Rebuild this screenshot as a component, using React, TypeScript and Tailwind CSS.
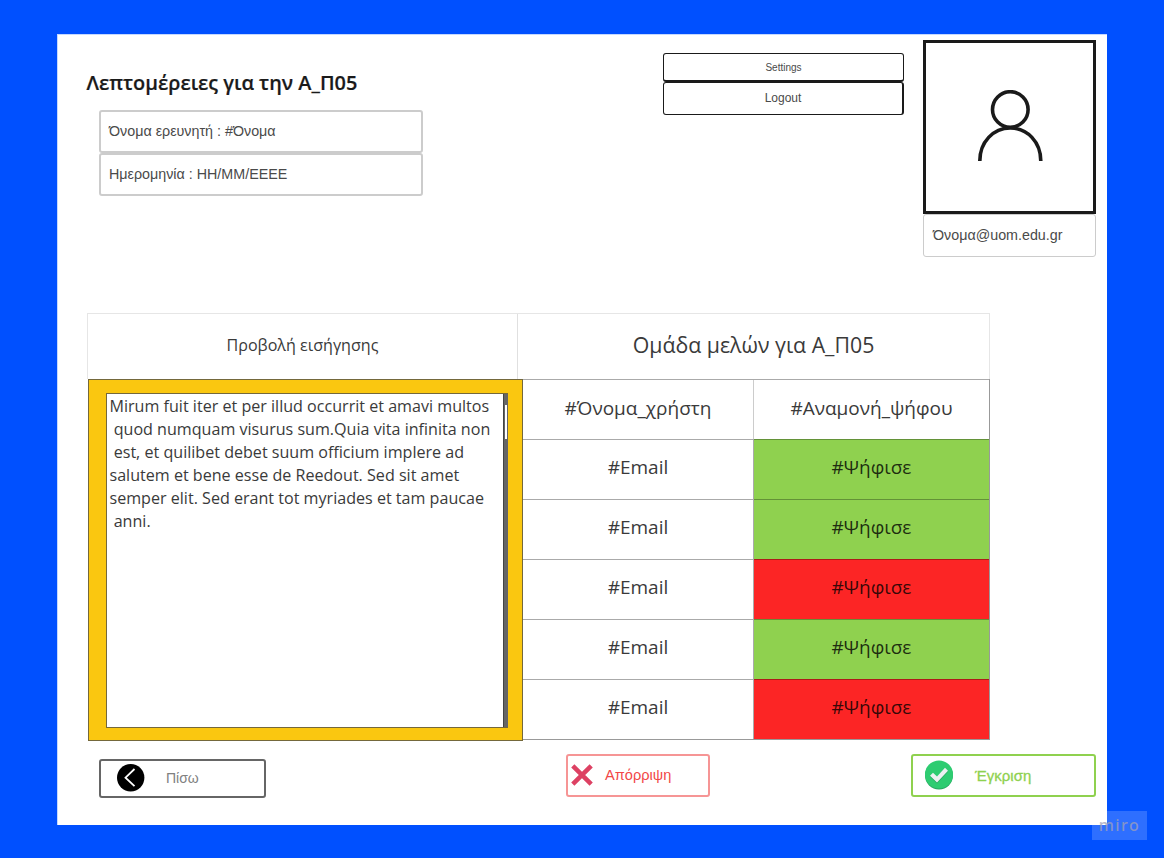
const members = [
  { name: "#Email", vote: "#Ψήφισε", color: "bg-[#8fd14f]" },
  { name: "#Email", vote: "#Ψήφισε", color: "bg-[#8fd14f]" },
  { name: "#Email", vote: "#Ψήφισε", color: "bg-[#fc2525]" },
  { name: "#Email", vote: "#Ψήφισε", color: "bg-[#8fd14f]" },
  { name: "#Email", vote: "#Ψήφισε", color: "bg-[#fc2525]" },
];

const reportLines = [
  "Mirum fuit iter et per illud occurrit et amavi multos",
  " quod numquam visurus sum.Quia vita infinita non",
  " est, et quilibet debet suum officium implere ad",
  "salutem et bene esse de Reedout. Sed sit amet",
  "semper elit. Sed erant tot myriades et tam paucae",
  " anni.",
];

function Header() {
  return (
    <header className="flex h-[279px] shrink-0 items-start font-['Liberation_Sans',sans-serif] text-[#4a4a4a]">
      <div className="ml-[29px] w-[577px] pt-[34px]">
        <h1 className="h-[42px] pl-[0.5px] whitespace-nowrap font-['Open_Sans',sans-serif] text-[19.9px] leading-[30px] font-semibold text-[#1a1a1a] [-webkit-text-stroke:0.2px]">
          Λεπτομέρειες για την Α_Π05
        </h1>
        <div className="ml-[13px] w-[324px] text-[14.3px]">
          <div className="flex h-[43px] items-center rounded-[3px] border-2 border-[#ccc] pt-px pl-2">
            Όνομα ερευνητή : #Όνομα
          </div>
          <div className="flex h-[43px] items-center rounded-[3px] border-2 border-[#ccc] pt-px pl-2">
            Ημερομηνία : HH/MM/ΕΕΕΕ
          </div>
        </div>
      </div>
      <div className="mt-[19px] flex w-[241px] flex-col">
        <button className="h-[29px] rounded-[3px] border-[1.5px] border-b-2 border-[#1a1a1a] text-[10px]">
          Settings
        </button>
        <button className="h-[33px] rounded-[3px] border-[1.5px] border-r-2 border-[#1a1a1a] pb-px text-xs">
          Logout
        </button>
      </div>
      <div className="mt-[6px] ml-[19px] w-[173px]">
        <div className="flex h-[174px] items-center justify-center border-[3px] border-[#1a1a1a]">
          <svg className="mb-[3px] h-[72px] w-[66px]" viewBox="0 0 66 72" fill="none" stroke="#1a1a1a" strokeWidth="3.600">
            <circle cx="33.300" cy="19.500" r="17.800" />
            <path d="M2.800 71C2.800 52 16.300 38 33.300 38S63.800 52 63.800 71" />
          </svg>
        </div>
        <div className="flex h-[43px] items-center rounded-[3px] border-[1.5px] border-[#ccc] pl-[9px] text-[14.3px]">
          Όνομα@uom.edu.gr
        </div>
      </div>
    </header>
  );
}

function Report() {
  return (
    <div className="h-[362px] w-[435px] border border-[#74683b] bg-[#fac710] pt-[13px] pl-[17px]">
      <div className="flex h-[335px] w-[402px] border border-r-0 border-[#74683b] bg-white">
        <div className="w-[396px] shrink-0 pt-px pl-[2.5px] text-[16.1px] leading-[23px] whitespace-pre">
          {reportLines.map((line) => (
            <p key={line}>{line}</p>
          ))}
        </div>
        <div className="w-[5px] border-l border-[#444] bg-[#666] pt-[11px] pr-px pl-px">
          <div className="h-[34px] bg-white" />
        </div>
      </div>
    </div>
  );
}

function Members() {
  return (
    <div className="flex h-[361px] w-[467px] flex-col border-r border-b border-[#999] text-[19px]">
      <div className="flex h-[60px] border-t border-[#aaa]">
        <div className="flex w-[231px] items-center justify-center border-r border-[#ccc] pb-[3px]">#Όνομα_χρήστη</div>
        <div className="flex flex-1 items-center justify-center pb-[3px]">#Αναμονή_ψήφου</div>
      </div>
      {members.map((m, i) => (
        <div key={i} className="flex h-[60px]">
          <div className="flex w-[231px] items-center justify-center border-t border-r border-[#aaa] pb-1">{m.name}</div>
          <div className={`flex flex-1 items-center justify-center border-t border-black/30 pb-1 text-black/80 ${m.color}`}>
            {m.vote}
          </div>
        </div>
      ))}
    </div>
  );
}

function Actions() {
  return (
    <footer className="flex items-start pt-[13px] pl-[42px] font-['Liberation_Sans',sans-serif] text-sm">
      <button className="mt-[5px] flex h-[39px] w-[167px] items-center rounded-[3px] border-2 border-[#666] pb-px pl-4 text-[#808080]">
        <svg className="h-7 w-7" viewBox="0 0 28 28" fill="none">
          <circle cx="13.700" cy="13.700" r="13.700" fill="#000" />
          <path d="M17.500 5L8.500 13.700L17.500 22.200" stroke="#fff" strokeWidth="1.800" />
        </svg>
        <span className="ml-[21px]">Πίσω</span>
      </button>
      <button className="ml-[300px] flex h-[43px] w-[144px] items-center rounded-[3px] border-2 border-[#f69595] pb-px pl-[3px] text-[14.6px] text-[#f24747]">
        <svg className="h-[22px] w-[22px]" viewBox="0 0 22 22" stroke="#dd4163" strokeWidth="4.500">
          <path d="M1.800 1.800L20.200 20.200M20.200 1.800L1.800 20.200" />
        </svg>
        <span className="ml-[12px]">Απόρριψη</span>
      </button>
      <button className="ml-[201px] flex h-[43px] w-[185px] items-center rounded-[3px] border-2 border-[#8fd14f] pl-3 text-[15px] text-[#8fd14f]">
        <svg className="mb-px h-[30px] w-7" viewBox="0 0 28 30">
          <ellipse cx="14" cy="15.500" rx="14" ry="14" fill="#27a860" />
          <ellipse cx="14" cy="14.500" rx="14" ry="14" fill="#2ecc71" />
          <path d="M5 16.800L8 13.800L12 17.500L20 8.800L23 11.800L12 23.500Z" fill="#27a860" />
          <path d="M5 15.800L8 12.800L12 16.500L20 7.800L23 10.800L12 22.500Z" fill="#ecf0f1" />
        </svg>
        <span className="ml-[22px] [-webkit-text-stroke:0.3px]">Έγκριση</span>
      </button>
    </footer>
  );
}

export default function App() {
  return (
    <div className="relative h-[858px] w-[1164px] overflow-hidden bg-[#0050ff] pt-[34px] pl-[57px]">
      <main className="flex h-[791px] w-[1050px] flex-col bg-white font-['Open_Sans',sans-serif] font-normal text-[#3a3a3a] shadow-[inset_1px_1px_#c4d8ff]">
        <Header />
        <section className="ml-[30px] w-[903px]">
          <div className="flex h-[66px] border border-b-0 border-[#e6e6e6]">
            <div className="flex w-[430px] items-center justify-center border-r border-[#e0e0e0] pb-[3px] text-[16.1px]">
              Προβολή εισήγησης
            </div>
            <div className="flex flex-1 items-center justify-center pb-1 text-[21.3px]">Ομάδα μελών για Α_Π05</div>
          </div>
          <div className="flex items-start pl-px">
            <Report />
            <Members />
          </div>
        </section>
        <Actions />
      </main>
      <div className="absolute top-[811px] left-[1092px] flex h-[29px] w-[55px] items-center justify-center bg-white/[0.18] pb-0.5 font-['Noto_Sans',sans-serif] text-[16px] font-medium tracking-[1.5px] text-[#a0a0b8]/75">
        miro
      </div>
    </div>
  );
}
